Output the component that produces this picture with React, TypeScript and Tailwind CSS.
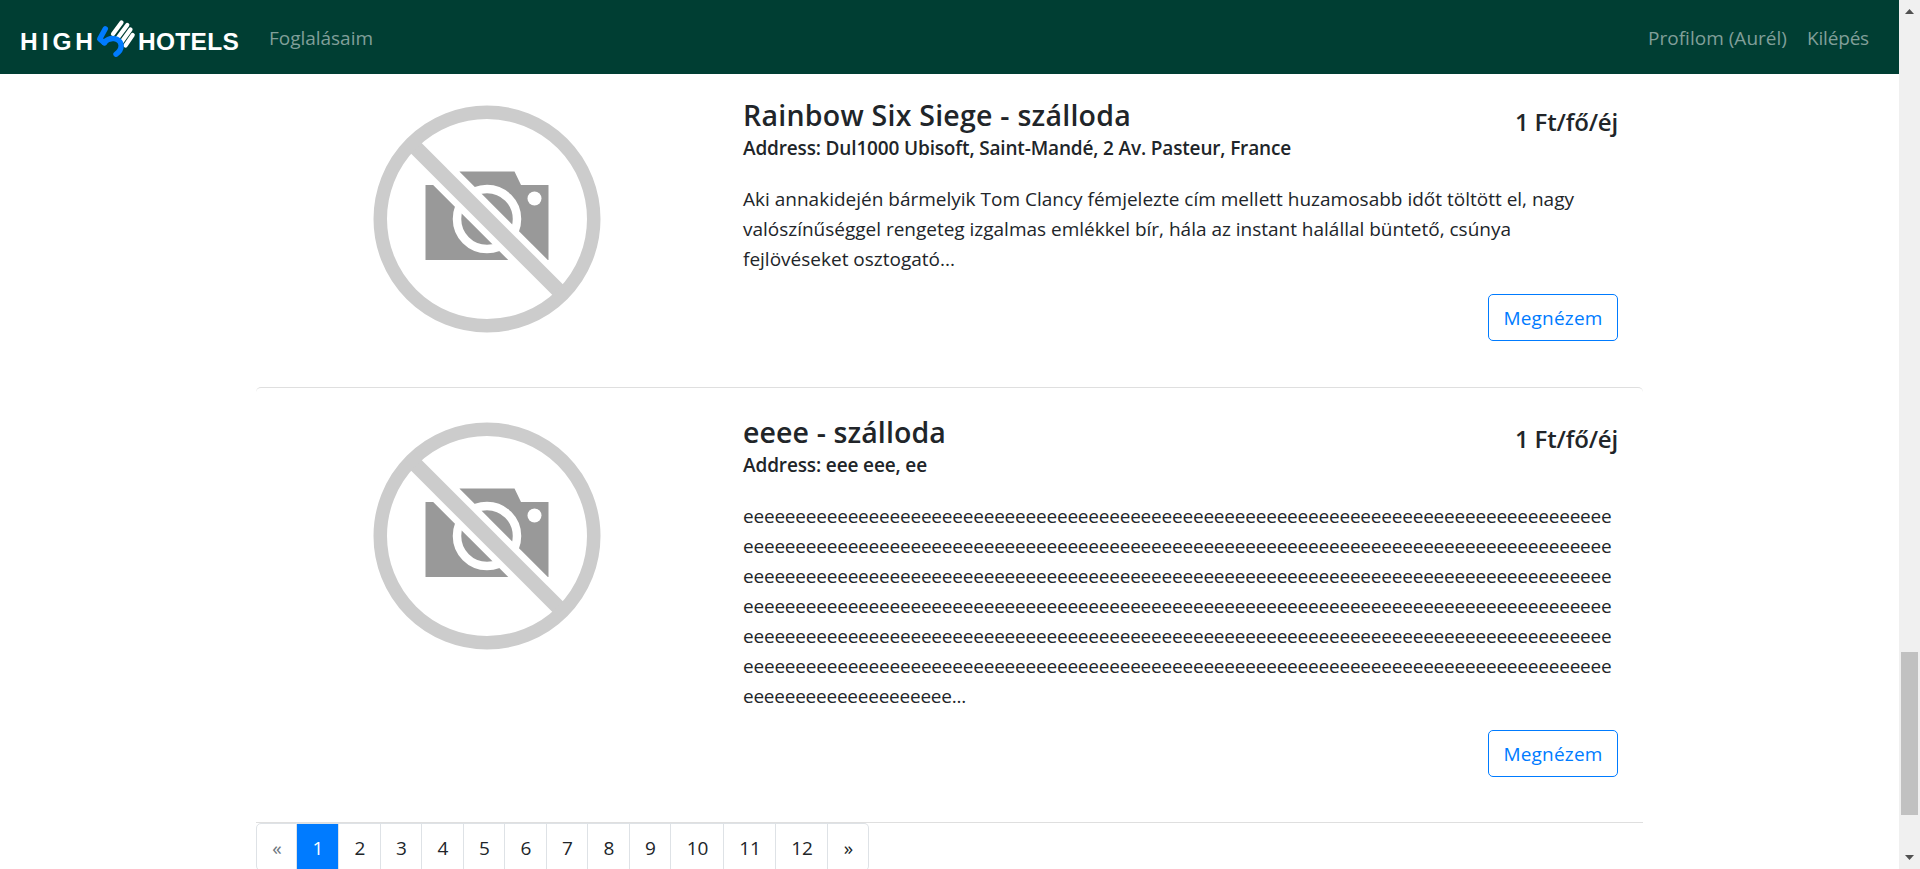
import React from "react";

type Fit = { text: string; width: number; className?: string };

/** One line of text, spaced out to a fixed measure. */
function Line({ text, width, className = "" }: Fit) {
  const ref = React.useRef<HTMLSpanElement>(null);
  React.useLayoutEffect(() => {
    const el = ref.current;
    if (!el) return;
    el.style.letterSpacing = "0px";
    const natural = el.getBoundingClientRect().width;
    el.style.letterSpacing = `${(width - natural) / text.length}px`;
  }, [text, width]);
  return (
    <span ref={ref} className={`inline-block whitespace-nowrap ${className}`}>
      {text}
    </span>
  );
}

function Logo() {
  return (
    <div className="flex h-[40px] w-[219px] items-center text-white [font-family:'Liberation_Sans',sans-serif] text-[24.5px] leading-[40px] font-bold">
      <div className="w-[75px] pt-[9px]">
        <Line text="HIGH" width={77} />
      </div>
      <svg className="h-[40px] w-[43px] shrink-0" viewBox="95 17 43 40" fill="none" strokeLinecap="round">
        <g stroke="#fff" strokeWidth="4.2">
          <path d="M121.500 22.500 L113 34" />
          <path d="M127.300 25 L118 37.500" />
          <path d="M130.500 29.500 L121.500 42" />
          <path d="M132.700 35 L125.500 45.500" />
        </g>
        <path d="M105.300 28.800 L99.700 39 L104.500 43" stroke="#007bff" strokeWidth="5.4" strokeLinejoin="round" />
        <path d="M104 42.500 C110 36.500 119.500 37.500 121 44.500 C121.700 49 119.500 51.800 116 54.200" stroke="#007bff" strokeWidth="5.4" />
      </svg>
      <div className="w-[101px] pt-[9px]">
        <Line text="HOTELS" width={101} />
      </div>
    </div>
  );
}

function NoPhoto() {
  return (
    <svg className="h-[250px] w-[250px]" viewBox="0 0 250 250">
      <path d="M63.500 91 H97.500 V77.500 H152.500 L159 91 H186.500 V166 H63.500 Z" fill="#999" />
      <circle cx="125" cy="125" r="30" fill="none" stroke="#fff" strokeWidth="8.500" />
      <circle cx="172.500" cy="104.500" r="7" fill="#fff" />
      <path d="M54 54 L196 196" stroke="#fff" strokeWidth="28" />
      <path d="M52 52 L198 198" stroke="#ccc" strokeWidth="15" />
      <circle cx="125" cy="125" r="106.750" fill="none" stroke="#ccc" strokeWidth="13.500" />
    </svg>
  );
}

type Hotel = { name: Fit; address: Fit; lines: Fit[] };

const E_LINE = "e".repeat(83);

const hotels: Hotel[] = [
  {
    name: { text: "Rainbow Six Siege - szálloda", width: 388 },
    address: { text: "Address: Dul1000 Ubisoft, Saint-Mandé, 2 Av. Pasteur, France", width: 548 },
    lines: [
      { text: "Aki annakidején bármelyik Tom Clancy fémjelezte cím mellett huzamosabb időt töltött el, nagy", width: 831 },
      { text: "valószínűséggel rengeteg izgalmas emlékkel bír, hála az instant halállal büntető, csúnya", width: 768 },
      { text: "fejlövéseket osztogató...", width: 212 },
    ],
  },
  {
    name: { text: "eeee - szálloda", width: 203 },
    address: { text: "Address: eee eee, ee", width: 184 },
    lines: [
      ...Array.from({ length: 6 }, () => ({ text: E_LINE, width: 868.5 })),
      { text: "e".repeat(20) + "...", width: 223 },
    ],
  },
];

function HotelCard({ hotel, className }: { hotel: Hotel; className: string }) {
  return (
    <article className={`flex w-[1387px] border-[#dfdfdf] ${className}`}>
      <div className="flex w-[487px] shrink-0 justify-center pr-[25px]">
        <div className="-mt-[2px]">
          <NoPhoto />
        </div>
      </div>
      <div className="w-[875px]">
        <div className="flex h-[88px] justify-between">
          <div>
            <h4 className="h-[40px] pt-px text-[28.5px] leading-[36px] font-semibold">
              <Line {...hotel.name} />
            </h4>
            <h6 className="h-[24px] text-[19px] leading-[24px] font-semibold">
              <Line {...hotel.address} />
            </h6>
          </div>
          <h5 className="pt-[11px] text-[24px] leading-[30px] font-semibold">
            <Line text="1 Ft/fő/éj" width={103} />
          </h5>
        </div>
        <div className="text-[19px] leading-[30px]">
          {hotel.lines.map((l, i) => (
            <p key={i} className="h-[30px]">
              <Line {...l} />
            </p>
          ))}
        </div>
        <div className="mt-[19.6px] flex justify-end">
          <button className="flex h-[47px] w-[130px] items-center justify-center rounded-[5px] border border-[#007bff] pt-px text-[19px] leading-[30px] text-[#007bff]">
            <Line text="Megnézem" width={99} />
          </button>
        </div>
      </div>
    </article>
  );
}

const pages = [
  { label: "«", width: "w-[41px]", look: "rounded-l-[5px] border-l text-[#6c757d]" },
  { label: "1", width: "w-[42px]", look: "bg-[#007bff] border-[#007bff] text-white" },
  { label: "2", width: "w-[42px]", look: "" },
  { label: "3", width: "w-[41px]", look: "" },
  { label: "4", width: "w-[42px]", look: "" },
  { label: "5", width: "w-[41px]", look: "" },
  { label: "6", width: "w-[42px]", look: "" },
  { label: "7", width: "w-[41px]", look: "" },
  { label: "8", width: "w-[42px]", look: "" },
  { label: "9", width: "w-[41px]", look: "" },
  { label: "10", width: "w-[53px]", look: "" },
  { label: "11", width: "w-[52px]", look: "" },
  { label: "12", width: "w-[52px]", look: "" },
  { label: "»", width: "w-[41px]", look: "rounded-r-[5px]" },
];

export default function App() {
  return (
    <div className="flex h-[869px] w-[1920px] overflow-hidden bg-white text-[#212529] [font-family:'Open_Sans','Noto_Sans',sans-serif]">
      <div className="flex w-[1899px] flex-col">
        <nav className="flex h-[74px] shrink-0 items-center bg-[#003e33] pr-[30px] pl-[20px] text-[19px] text-[#809f99]">
          <Logo />
          <div className="ml-[30px] w-[104px] pt-[3px]">
            <Line text="Foglalásaim" width={104} />
          </div>
          <div className="ml-auto flex gap-[20px] pt-[3px]">
            <Line text="Profilom (Aurél)" width={139} />
            <Line text="Kilépés" width={62} />
          </div>
        </nav>
        <main className="flex flex-col pl-[256px]">
          <HotelCard hotel={hotels[0]} className="h-[313px] pt-[22px]" />
          <HotelCard hotel={hotels[1]} className="h-[436px] rounded-t-[5px] border-t border-b pt-[24.6px]" />
          <div className="flex h-[46px]">
            {pages.map((p) => (
              <div
                key={p.label}
                className={`flex h-[48px] shrink-0 items-center justify-center border-t border-r border-b border-[#dee2e6] pt-[2px] pl-px text-[19px] ${p.width} ${p.look}`}
              >
                {p.label}
              </div>
            ))}
          </div>
        </main>
      </div>
      <div className="flex w-[21px] flex-col items-center bg-[#f0f0f0]">
        <svg className="h-[21px] w-[21px]" viewBox="0 0 21 21">
          <path d="M6 14 L10.500 9 L15 14 Z" fill="#505050" />
        </svg>
        <div className="mt-[631px] h-[163px] w-[17px] bg-[#c1c1c1]" />
        <svg className="mt-auto h-[21px] w-[21px]" viewBox="0 0 21 21">
          <path d="M6 7 L10.500 12 L15 7 Z" fill="#505050" />
        </svg>
      </div>
    </div>
  );
}
